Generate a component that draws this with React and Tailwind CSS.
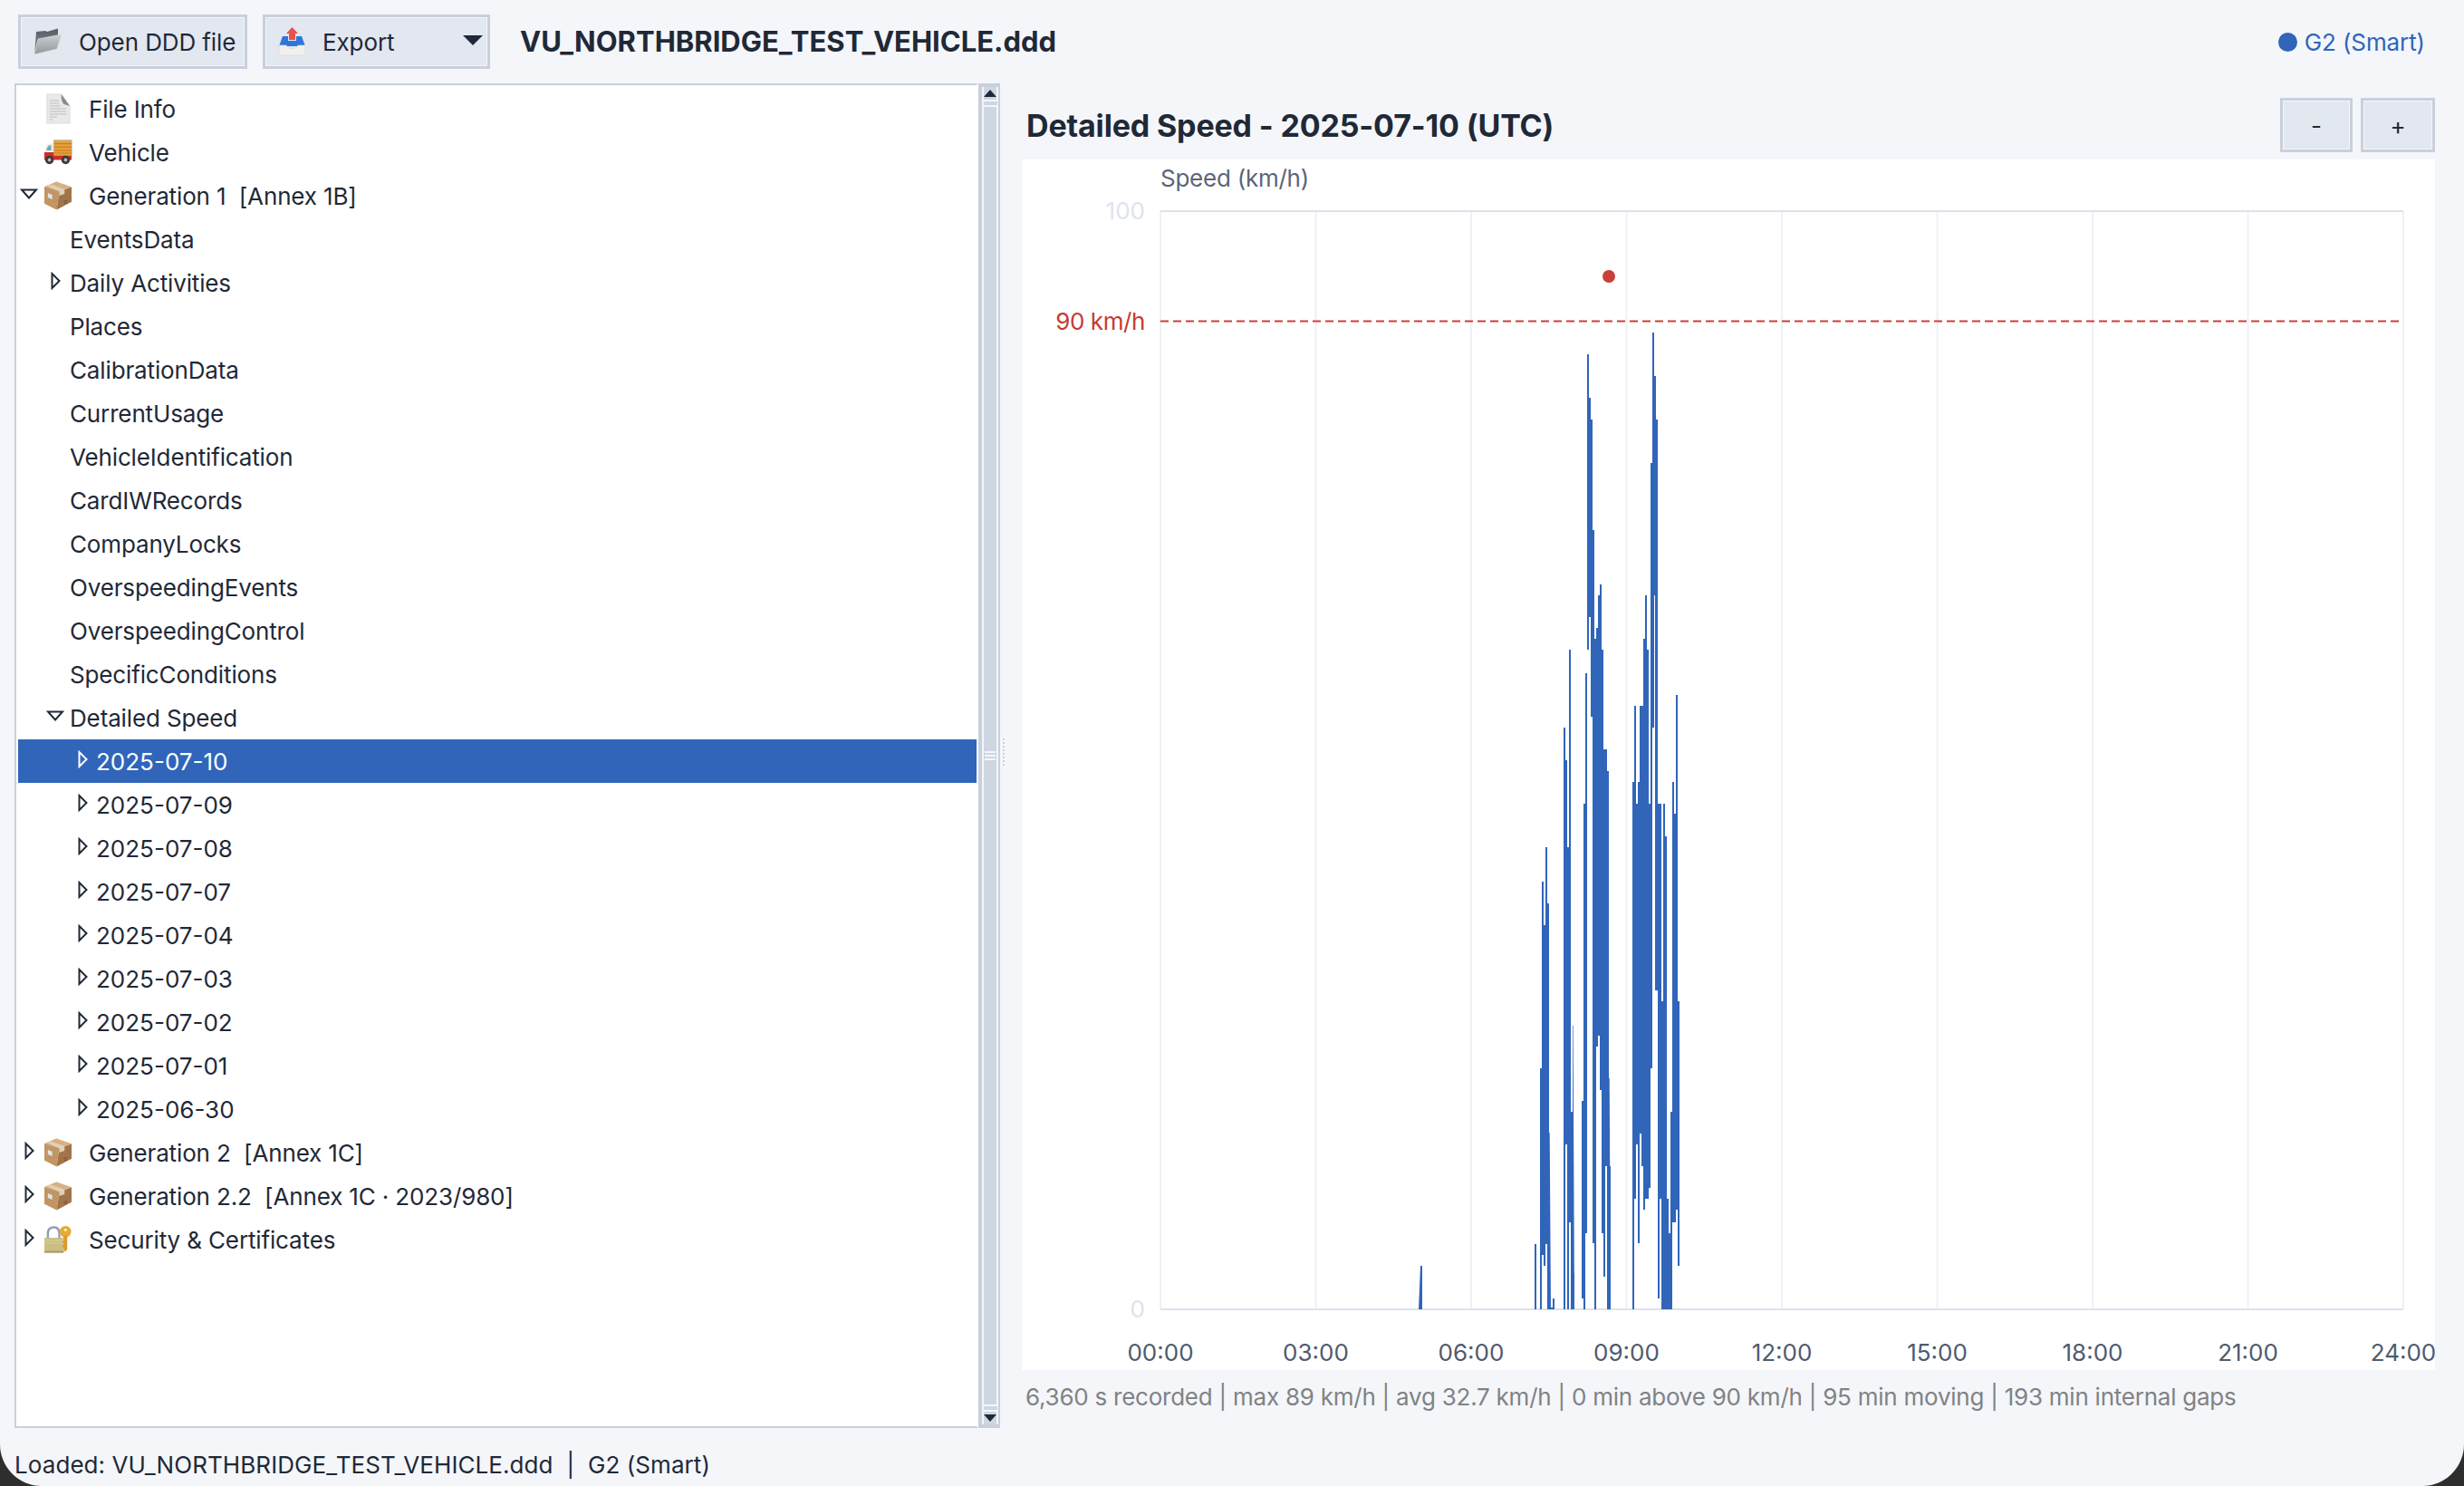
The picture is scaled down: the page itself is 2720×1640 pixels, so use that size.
// tree rows, level picks indent, arrow is open/closed/none
const treeRows = [
  { level: 0, icon: 'file', label: 'File Info' },
  { level: 0, icon: 'truck', label: 'Vehicle' },
  { level: 0, arrow: 'open', icon: 'box', label: 'Generation 1  [Annex 1B]' },
  { level: 1, label: 'EventsData' },
  { level: 1, arrow: 'closed', label: 'Daily Activities' },
  { level: 1, label: 'Places' },
  { level: 1, label: 'CalibrationData' },
  { level: 1, label: 'CurrentUsage' },
  { level: 1, label: 'VehicleIdentification' },
  { level: 1, label: 'CardIWRecords' },
  { level: 1, label: 'CompanyLocks' },
  { level: 1, label: 'OverspeedingEvents' },
  { level: 1, label: 'OverspeedingControl' },
  { level: 1, label: 'SpecificConditions' },
  { level: 1, arrow: 'open', label: 'Detailed Speed' },
  { level: 2, arrow: 'closed', label: '2025-07-10', selected: true },
  { level: 2, arrow: 'closed', label: '2025-07-09' },
  { level: 2, arrow: 'closed', label: '2025-07-08' },
  { level: 2, arrow: 'closed', label: '2025-07-07' },
  { level: 2, arrow: 'closed', label: '2025-07-04' },
  { level: 2, arrow: 'closed', label: '2025-07-03' },
  { level: 2, arrow: 'closed', label: '2025-07-02' },
  { level: 2, arrow: 'closed', label: '2025-07-01' },
  { level: 2, arrow: 'closed', label: '2025-06-30' },
  { level: 0, arrow: 'closed', icon: 'box', label: 'Generation 2  [Annex 1C]' },
  { level: 0, arrow: 'closed', icon: 'box', label: 'Generation 2.2  [Annex 1C · 2023/980]' },
  { level: 0, arrow: 'closed', icon: 'lock', label: 'Security & Certificates' },
];

// [x, top, bottom] in page pixels, each column 2px wide
const speedBars = [
  [1694, 1373, 1445], [1700, 1179, 1445], [1702, 973, 1385], [1704, 1021, 1397], [1706, 935, 1373],
  [1708, 997, 1445], [1712, 1443, 1445], [1714, 1433, 1445],
  [1726, 803, 1445], [1728, 839, 1263], [1730, 935, 1445], [1732, 717, 1349], [1734, 1227, 1445], [1736, 1405, 1445],
  [1746, 1215, 1433], [1748, 887, 1445], [1750, 743, 1361], [1752, 391, 717], [1754, 439, 681], [1756, 463, 791],
  [1758, 585, 1372], [1760, 705, 1445], [1762, 693, 1155], [1764, 657, 1143], [1766, 645, 1203], [1768, 717, 1361],
  [1770, 827, 1409], [1772, 827, 1287], [1774, 851, 1445], [1776, 1287, 1445],
  [1802, 863, 1445], [1804, 779, 1323], [1806, 887, 1263], [1808, 863, 1372], [1810, 779, 1251], [1812, 779, 1287],
  [1814, 705, 1335], [1816, 657, 1323], [1818, 717, 1323], [1820, 887, 1311], [1822, 511, 1179], [1824, 367, 803],
  [1826, 415, 657], [1827, 657, 1093], [1828, 463, 1093], [1830, 887, 1433], [1832, 887, 1323], [1834, 1105, 1445], [1836, 887, 1445],
  [1838, 923, 1445], [1840, 1323, 1445], [1842, 1361, 1445], [1844, 1227, 1445], [1846, 863, 1349], [1848, 898, 1349],
  [1850, 767, 1335], [1852, 1105, 1397],
];

// slanted edges where the line drops back between samples
const speedSlopes = [
  '1568,1397 1570,1397 1570,1445 1566,1445',
  '1710,1250 1710.7,1250 1712,1445 1710,1445',
  '1736,1132 1736.6,1132 1738,1445 1736,1445',
  '1776,1190 1776.7,1190 1778,1445 1776,1445',
];

const hourTicks = ['00:00', '03:00', '06:00', '09:00', '12:00', '15:00', '18:00', '21:00', '24:00'];

function TreeArrow({ type, selected }) {
  const stroke = selected ? '#ffffff' : '#1f2937';
  if (type === 'open') {
    return (
      <svg width="20" height="12" viewBox="0 0 20 12" fill="none" className="mb-1">
        <path d="M2 1.5H18L10 10.5Z" stroke={stroke} strokeWidth="2" />
      </svg>
    );
  }
  return (
    <svg width="11" height="20" viewBox="0 0 11 20" fill="none" className="mb-1">
      <path d="M1.5 2V18L9.5 10Z" stroke={stroke} strokeWidth="2" />
    </svg>
  );
}

function FileIcon() {
  return (
    <svg width="28" height="34" viewBox="0 0 30 34" preserveAspectRatio="none">
      <path d="M2 1H19L29 14V33H2Z" fill="#e9e9e9" stroke="#dcdcdc" />
      <path d="M19 1L29 14L22 12Q18 8 19 1Z" fill="#8b8b8b" />
      <path d="M5 8H16M5 11H16M5 14H18M5 17H25M5 20H25M5 23H25M5 26H14M5 29H9" stroke="#bdbdbd" strokeWidth="1.2" />
    </svg>
  );
}

function TruckIcon() {
  return (
    <svg width="34" height="30" viewBox="0 0 34 30">
      <rect x="12" y="1" width="21" height="18" fill="#e8a23a" stroke="#aab0b6" />
      <path d="M13 5H33M13 9H33M13 13H33M13 16H33" stroke="#c77f22" strokeWidth="1.2" />
      <path d="M11 5H6Q3 6 2 14H11Z" fill="#f3ead7" />
      <path d="M9 7H6.5Q4.5 8 3.5 13H9Z" fill="#5fb0c4" />
      <path d="M1 15H12V19H33V24H1Z" fill="#cf2f26" />
      <circle cx="7" cy="24" r="5" fill="#3a3a3a" />
      <circle cx="7" cy="24" r="2" fill="#b9b9b9" />
      <circle cx="26" cy="24" r="5" fill="#3a3a3a" />
      <circle cx="26" cy="24" r="2" fill="#b9b9b9" />
    </svg>
  );
}

function BoxIcon() {
  return (
    <svg width="33" height="34" viewBox="0 0 33 34">
      <path d="M15 1L1 7V26L15 33L18 12Z" fill="#c29563" />
      <path d="M18 12L32 7V24L15 33Z" fill="#a2744a" />
      <path d="M1 7L15 1L32 7L18 12Z" fill="#d8b083" />
      <path d="M8 4L24 9.5V15L18 17V12L4 6Z" fill="#dfd0b8" />
      <path d="M5 14L10 16V21L5 19Z" fill="#dfe4e8" />
      <path d="M23 24L27 22.5M24 26L27 25" stroke="#6d4a2a" strokeWidth="1" />
    </svg>
  );
}

function LockIcon() {
  return (
    <svg width="33" height="32" viewBox="0 0 33 32">
      <path d="M5 16V9Q5 2 12 2Q18 2 18 9V16" fill="none" stroke="#8e9fb8" strokeWidth="2.5" />
      <rect x="1" y="14" width="22" height="17" fill="#c9bf83" />
      <rect x="1" y="29" width="22" height="2" fill="#a89e66" />
      <path d="M1 17H23M1 20H23" stroke="#d8d0a0" strokeWidth="1" />
      <circle cx="25" cy="7" r="6.5" fill="#e5ab33" />
      <circle cx="25" cy="5" r="1.6" fill="#fff3c9" />
      <path d="M23 12H27V27L25 30L23 28V25L21 24L23 22V20L21 19L23 17Z" fill="#d99a26" />
    </svg>
  );
}

function FolderIcon() {
  return (
    <svg width="32" height="30" viewBox="0 0 32 30">
      <defs>
        <linearGradient id="folderFront" x1="0" y1="0" x2="0" y2="1">
          <stop offset="0" stopColor="#cdd0d2" />
          <stop offset="1" stopColor="#92969a" />
        </linearGradient>
        <linearGradient id="folderBack" x1="0" y1="0" x2="0" y2="1">
          <stop offset="0" stopColor="#565d65" />
          <stop offset="1" stopColor="#8b9095" />
        </linearGradient>
      </defs>
      <path d="M3 4L13 3L15 4L27 0.5V12L1 29Z" fill="url(#folderBack)" />
      <path d="M5 12L31 7L26 23L1 29Z" fill="url(#folderFront)" stroke="#e2e4e6" strokeWidth="0.6" />
    </svg>
  );
}

function ExportIcon() {
  return (
    <svg width="31" height="32" viewBox="0 0 31 32">
      <path d="M15.5 0L22 7H19V14H12V7H9Z" fill="#e8524a" />
      <path d="M5 10H11V15H20V10H26L30 21H1Z" fill="#2f77d6" />
      <path d="M1 20H9Q11 24 15.5 24Q20 24 22 20H30V31H1Z" fill="#f2f0ea" stroke="#dbd9d3" strokeWidth="0.6" />
    </svg>
  );
}

const rowIcons = { file: FileIcon, truck: TruckIcon, box: BoxIcon, lock: LockIcon };

function TreeRow({ row }) {
  const Icon = rowIcons[row.icon];
  const indent = row.level === 0 ? 'pl-0' : row.level === 1 ? 'pl-[28px]' : 'pl-[58px]';
  const arrowBox = row.level === 0 ? 'w-[24px]' : 'w-[26px]';
  const labelClass = row.level === 2 ? 'ml-[2px]' : 'ml-[3px] tracking-[-0.14px]';
  return (
    <div className={`flex h-12 items-center whitespace-pre ${indent} ${row.selected ? 'bg-[#3065ba] text-white' : ''}`}>
      <span className={`flex shrink-0 items-center justify-center ${arrowBox}`}>
        {row.arrow && <TreeArrow type={row.arrow} selected={row.selected} />}
      </span>
      {Icon ? (
        <>
          <span className="ml-1 flex w-8 shrink-0 items-center justify-center">
            <Icon />
          </span>
          <span className="ml-[18px] tracking-[-0.14px]">{row.label}</span>
        </>
      ) : (
        <span className={labelClass}>{row.label}</span>
      )}
    </div>
  );
}

function ScrollArrow({ up }) {
  return (
    <div className="flex h-[14px] w-[14px] items-center justify-center bg-[#ced6e2]">
      <div className={`h-0 w-0 border-x-[7px] border-x-transparent ${up ? 'border-b-[8px] border-b-[#1f2937]' : 'border-t-[8px] border-t-[#1f2937]'}`} />
    </div>
  );
}

function Scrollbar() {
  return (
    <div className="flex w-6 shrink-0 flex-col items-center border-y-4 border-r-2 border-l-4 border-[#c8d0dc] bg-[#f4f6fa]">
      <ScrollArrow up />
      <div className="mt-[2px] h-1 w-[15px] bg-[#ced6e2]" />
      <div className="mt-[2px] flex w-[14px] flex-1 flex-col items-center justify-center gap-[2px] bg-[#ced6e2]">
        <div className="h-[2px] w-3 bg-[#f4f6fa]" />
        <div className="h-[2px] w-3 bg-[#f4f6fa]" />
        <div className="h-[2px] w-3 bg-[#f4f6fa]" />
      </div>
      <div className="my-[2px] h-1 w-[15px] bg-[#ced6e2]" />
      <ScrollArrow />
    </div>
  );
}

function SpeedChart() {
  return (
    <svg viewBox="1128 176 1560 1336" width="1560" height="1336" className="block bg-white">
      <text x="1281" y="206" fontSize="26" letterSpacing="-0.25" fill="#5b6678">Speed (km/h)</text>
      {hourTicks.map((_, i) => (
        <rect key={i} x={1280 + i * 171.5} y="233" width="2" height="1212" fill="#eef1f6" />
      ))}
      <rect x="1281" y="232" width="1372" height="2" fill="#dde2ec" />
      <rect x="1281" y="1444" width="1372" height="2" fill="#dde2ec" />
      <text x="1264" y="242" fontSize="26" textAnchor="end" fill="#dde4ee">100</text>
      <text x="1264" y="1454" fontSize="26" textAnchor="end" fill="#dde4ee">0</text>
      <text x="1264" y="364" fontSize="26" letterSpacing="-0.4" textAnchor="end" fill="#c53a32">90 km/h</text>
      <line x1="1281" y1="354.5" x2="2653" y2="354.5" stroke="#c9403a" strokeWidth="2" strokeDasharray="9 5" />
      {speedBars.map(([x, top, bottom]) => (
        <rect key={x} x={x} y={top} width="2" height={bottom - top} fill="#3065ba" />
      ))}
      {speedSlopes.map((points) => (
        <polygon key={points} points={points} fill="#3065ba" />
      ))}
      <circle cx="1776" cy="305" r="7" fill="#c9403a" />
      {hourTicks.map((t, i) => (
        <text key={t} x={1281 + i * 171.5} y="1502" fontSize="26" textAnchor="middle" fill="#4f5b6e">{t}</text>
      ))}
    </svg>
  );
}

function ToolButton({ className, children }) {
  return (
    <button className={`flex items-center border-[3px] border-[#c8d0dc] bg-[#e3e7f0] shadow-[inset_0_0_0_1px_#f4f6fa] ${className}`}>
      {children}
    </button>
  );
}

export default function App() {
  return (
    <div className="h-[1640px] w-[2720px] overflow-hidden bg-[#2e2e2e] font-[Inter,sans-serif] text-[26px] text-[#1f2937]">
      <div className="flex h-[1640px] flex-col rounded-b-[46px] bg-[#f4f6fa]">
        <div className="flex h-[92px] shrink-0 items-center pr-[43px] pl-5">
          <ToolButton className="h-[60px] w-[253px] pl-[14px]">
            <FolderIcon />
            <span className="ml-[18px] tracking-[-0.1px]">Open DDD file</span>
          </ToolButton>
          <ToolButton className="ml-[17px] h-[60px] w-[251px] pl-[14px]">
            <ExportIcon />
            <span className="ml-[18px] tracking-[-0.1px]">Export</span>
            <div className="mt-[-4px] mr-[5px] ml-auto h-0 w-0 border-x-[11px] border-t-[11px] border-x-transparent border-t-[#1f2937]" />
          </ToolButton>
          <span className="ml-[33px] text-[31px] font-bold">VU_NORTHBRIDGE_TEST_VEHICLE.ddd</span>
          <div className="ml-auto flex items-center gap-[8px] text-[#3065ba]">
            <div className="h-[21px] w-[21px] rounded-full bg-[#3065ba]" />
            <span className="tracking-[-0.1px]">G2 (Smart)</span>
          </div>
        </div>

        <div className="flex h-[1484px] shrink-0 pl-4">
          <div className="flex w-[1064px] shrink-0 flex-col border-2 border-[#c8d0dc] border-r-transparent bg-white p-[2px] pr-0">
            {treeRows.map((row) => (
              <TreeRow key={row.label} row={row} />
            ))}
          </div>
          <Scrollbar />
          <div className="flex w-6 shrink-0 flex-col justify-center gap-[2px] pb-[8px] pl-[3px]">
            {[0, 1, 2, 3, 4, 5, 6, 7].map((i) => (
              <div key={i} className="h-[2px] w-[2px] bg-[#c8d0dc]" />
            ))}
          </div>
          <div className="flex w-[1560px] shrink-0 flex-col">
            <div className="flex h-[84px] items-center justify-between pt-[8px] pl-[5px]">
              <h1 className="text-[34px] font-bold tracking-[-0.15px]">Detailed Speed - 2025-07-10 (UTC)</h1>
              <div className="flex gap-[9px]">
                <ToolButton className="h-[60px] w-[80px] justify-center">-</ToolButton>
                <ToolButton className="h-[60px] w-[82px] justify-center">+</ToolButton>
              </div>
            </div>
            <SpeedChart />
            <div className="pt-[10px] pl-1 tracking-[-0.24px] text-[#808285]">
              6,360 s recorded | max 89 km/h | avg 32.7 km/h | 0 min above 90 km/h | 95 min moving | 193 min internal gaps
            </div>
          </div>
        </div>

        <div className="flex flex-1 items-center whitespace-pre pt-[16px] pl-4 tracking-[0.08px]">
          Loaded: VU_NORTHBRIDGE_TEST_VEHICLE.ddd  |  G2 (Smart)
        </div>
      </div>
    </div>
  );
}
